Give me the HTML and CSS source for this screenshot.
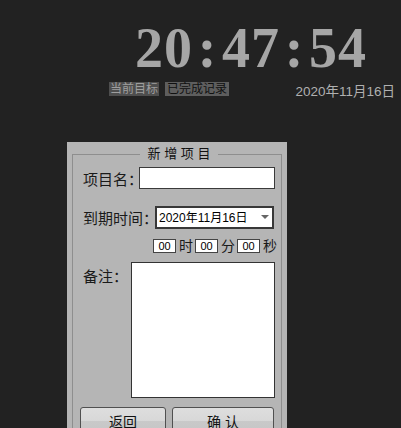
FILE: index.html
```html
<!DOCTYPE html>
<html lang="zh-CN">
<head>
    <meta charset="UTF-8">
    <meta name="viewport" content="width=device-width, initial-scale=1.0">
    <title>倒计时</title>
    <link rel="stylesheet" href="styles.css">
</head>
<body>
    <div class="header">
        <div class="clock">20<span class="colon">:</span>47<span class="colon">:</span>54</div>
        <div class="sub">
            <span class="tab tab-current">当前目标</span>
            <span class="tab tab-done">已完成记录</span>
            <span class="today">2020年11月16日</span>
        </div>
    </div>

    <div class="panel">
        <fieldset class="add-box">
            <legend>新 增 项 目</legend>
            <div class="row row-name">
                <label class="lbl lbl-name">项目名：</label>
                <input class="txt-name" type="text">
            </div>
            <div class="row row-date">
                <label class="lbl lbl-date">到期时间：</label>
                <div class="select-wrap">
                    <select class="sel-date">
                        <option>2020年11月16日</option>
                    </select>
                </div>
            </div>
            <div class="row row-time">
                <input class="num" type="text" value="00"><span class="unit">时</span>
                <input class="num" type="text" value="00"><span class="unit">分</span>
                <input class="num" type="text" value="00"><span class="unit">秒</span>
            </div>
            <div class="row row-note">
                <label class="lbl lbl-note">备注：</label>
                <textarea class="txt-note"></textarea>
            </div>
            <div class="row row-btns">
                <button class="btn btn-back">返回</button>
                <button class="btn btn-ok">确 认</button>
            </div>
        </fieldset>
    </div>
</body>
</html>
```

FILE: styles.css
```css
body {
    margin: 0;
    width: 401px;
    background: #222222;
    font-family: "Liberation Sans", "Noto Sans CJK SC", sans-serif;
    overflow: hidden;
}

.header {
    padding-top: 20px;
}

.clock {
    padding-left: 135px;
    font-family: "Liberation Serif", serif;
    font-weight: bold;
    font-size: 56px;
    line-height: 56px;
    letter-spacing: 1px;
    color: #a6a6a6;
}

.clock .colon {
    padding: 0 4.7px;
}

.sub {
    display: flex;
    align-items: center;
    height: 16px;
    margin-top: 5px;
    padding-left: 109px;
}

.tab {
    font-size: 12px;
    line-height: 14px;
}

.tab-current {
    padding: 0 1px;
    background: #4e4e4e;
    color: #9e9e9e;
}

.tab-done {
    margin-left: 6px;
    padding: 0 2px;
    background: #5e5e5e;
    color: #111;
}

.today {
    margin-left: auto;
    padding-right: 6px;
    padding-top: 2px;
    font-size: 13.5px;
    color: #b0b0b0;
}

.panel {
    width: 210px;
    height: 300px;
    margin: 45px 0 0 67px;
    padding: 4px 5px 0;
    background: #b5b5b5;
}

.add-box {
    margin: 0;
    min-width: 0;
    padding: 5px 6px 20px 10px;
    border: 1px solid #8e8e8e;
}

.add-box legend {
    margin: 0 auto;
    padding: 0 8px;
    font-size: 13px;
    line-height: 16px;
    color: #111;
}

.row {
    display: flex;
    align-items: center;
}

.lbl {
    flex: none;
    font-size: 15px;
    white-space: nowrap;
    color: #1a1a1a;
}

.row-name {
    height: 22px;
}

.lbl-name {
    width: 56px;
}

.txt-name {
    box-sizing: border-box;
    width: 136px;
    height: 22px;
    margin: 0;
    padding: 0 3px;
    border: 1px solid #3a3a3a;
    background: #fff;
    outline: none;
}

.row-date {
    height: 23px;
    margin-top: 17px;
}

.lbl-date {
    width: 72px;
}

.select-wrap {
    position: relative;
    width: 119px;
    height: 23px;
}

.sel-date {
    box-sizing: border-box;
    width: 100%;
    height: 100%;
    margin: 0;
    padding: 0 0 0 2px;
    border: 2px solid #383838;
    border-radius: 0;
    background: #fff;
    font-family: "Liberation Sans", "Noto Sans CJK SC", sans-serif;
    font-size: 12px;
    color: #000;
    appearance: none;
    -webkit-appearance: none;
    outline: none;
}

.select-wrap::after {
    content: "";
    position: absolute;
    right: 5px;
    top: 9px;
    border-left: 4px solid transparent;
    border-right: 4px solid transparent;
    border-top: 4px solid #666;
}

.row-time {
    justify-content: flex-end;
    height: 14px;
    margin-top: 10px;
    margin-right: -2px;
}

.num {
    box-sizing: border-box;
    width: 23px;
    height: 14px;
    margin: 0;
    padding: 0;
    border: 1px solid #444;
    background: #fff;
    font-family: "Liberation Sans", sans-serif;
    font-size: 11px;
    text-align: center;
    color: #000;
    outline: none;
}

.unit {
    margin: 0 2px 0 3px;
    font-size: 14px;
    line-height: 14px;
    color: #1a1a1a;
}

.unit:last-child {
    margin-right: 0;
}

.row-note {
    align-items: flex-start;
    margin-top: 9px;
}

.lbl-note {
    width: 48px;
    padding-top: 5px;
    line-height: 20px;
}

.txt-note {
    box-sizing: border-box;
    width: 144px;
    height: 136px;
    margin: 0;
    border: 1px solid #333;
    background: #fff;
    resize: none;
    outline: none;
}

.row-btns {
    margin-top: 9px;
}

.btn {
    height: 28px;
    margin: 0;
    padding: 0;
    border: 1px solid #505050;
    border-radius: 3px;
    background: linear-gradient(#dedede 0%, #d8d8d8 48%, #c9c9c9 50%, #c6c6c6 100%);
    font-family: "Liberation Sans", "Noto Sans CJK SC", sans-serif;
    font-size: 14px;
    color: #111;
}

.btn-back {
    width: 86px;
    margin-left: -3px;
}

.btn-ok {
    width: 102px;
    margin-left: 6px;
}
```
